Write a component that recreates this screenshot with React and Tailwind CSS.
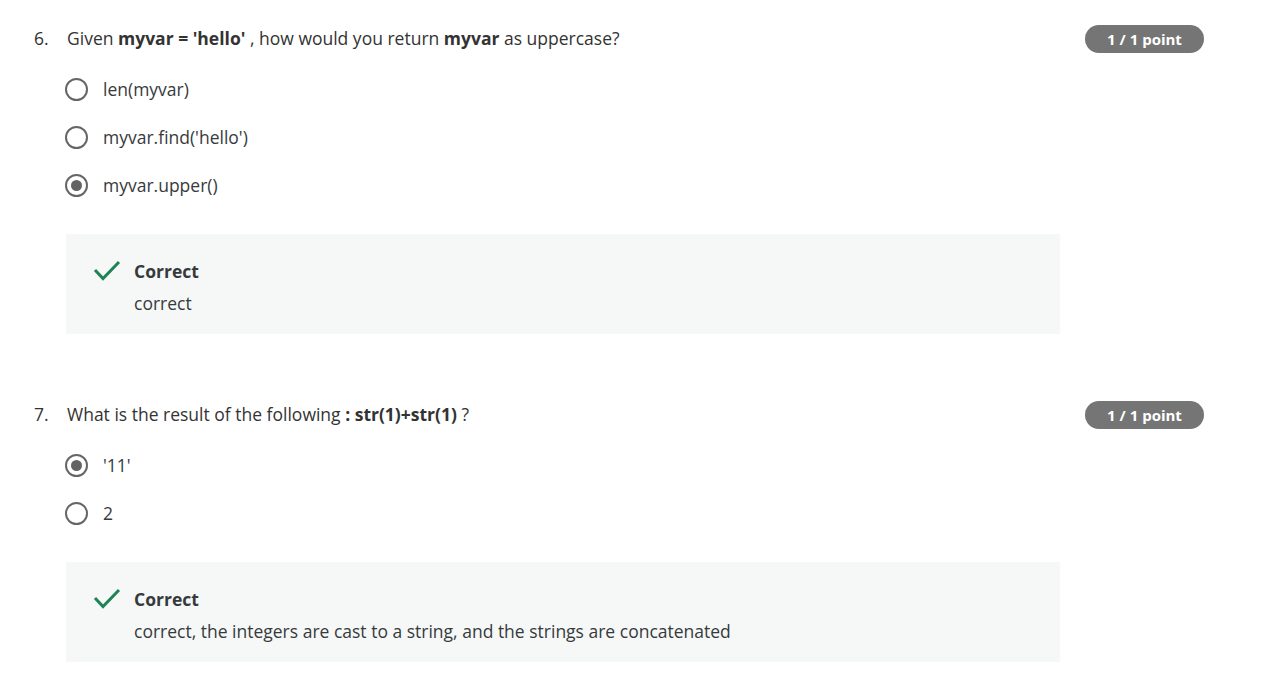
import React from "react";

function Radio({ checked }) {
  return (
    <div className="-ml-[2px] w-[23px] h-[23px] rounded-full border-[2.5px] border-[#666666] flex items-center justify-center shrink-0">
      {checked && <div className="w-[11px] h-[11px] rounded-full bg-[#636363]" />}
    </div>
  );
}

function Check() {
  return (
    <svg width="28" height="22" viewBox="0 0 28 22" className="shrink-0">
      <path d="M2 10 L10 18.5 L26 2" fill="none" stroke="#1f8354" strokeWidth="3" />
    </svg>
  );
}

function Question({ num, text, options, feedback }) {
  return (
    <div className="flex">
      <div className="w-[33px] shrink-0 text-[17.5px] leading-[24px] text-[#333333] pt-px">{num}</div>
      <div className="w-[994px] shrink-0">
        <div className="text-[17.5px] leading-[24px] text-[#333333] pt-px">{text}</div>
        <div className="mt-[15px] flex flex-col">
          {options.map((o, i) => (
            <div key={i} className="h-[48px] flex items-center">
              <Radio checked={o.checked} />
              <span className="ml-[15px] text-[17.5px] leading-[24px] text-[#373a3c]">{o.label}</span>
            </div>
          ))}
        </div>
        <div className="mt-[25px] -ml-px w-[994px] bg-[#f5f8f7] h-[100px] pt-[25px] pl-[27px] flex">
          <div className="pt-[1px]"><Check /></div>
          <div className="ml-[13px]">
            <div className="text-[17.5px] leading-[24px] font-bold text-[#373a3c]">Correct</div>
            <div className="mt-[8px] text-[17.5px] leading-[24px] text-[#373a3c]">{feedback}</div>
          </div>
        </div>
      </div>
      <div className="ml-[24px] shrink-0">
        <div className="w-[119px] h-[28px] rounded-full bg-[#757575] text-white text-[15px] font-bold flex items-center justify-center">
          1 / 1 point
        </div>
      </div>
    </div>
  );
}

export default function App() {
  return (
    <div className="bg-white min-h-[683px] pl-[34px] pt-[25px]" style={{ fontFamily: '"Open Sans", sans-serif' }}>
      <Question
        num="6."
        text={<>Given <b className="font-bold">myvar = 'hello'</b> , how would you return <b className="font-bold">myvar</b> as uppercase?</>}
        options={[
          { label: "len(myvar)" },
          { label: "myvar.find('hello')" },
          { label: "myvar.upper()", checked: true },
        ]}
        feedback="correct"
      />
      <div className="h-[67px]" />
      <Question
        num="7."
        text={<>What is the result of the following <b className="font-bold">: str(1)+str(1)</b> ?</>}
        options={[
          { label: "'11'", checked: true },
          { label: "2" },
        ]}
        feedback="correct, the integers are cast to a string, and the strings are concatenated"
      />
    </div>
  );
}
